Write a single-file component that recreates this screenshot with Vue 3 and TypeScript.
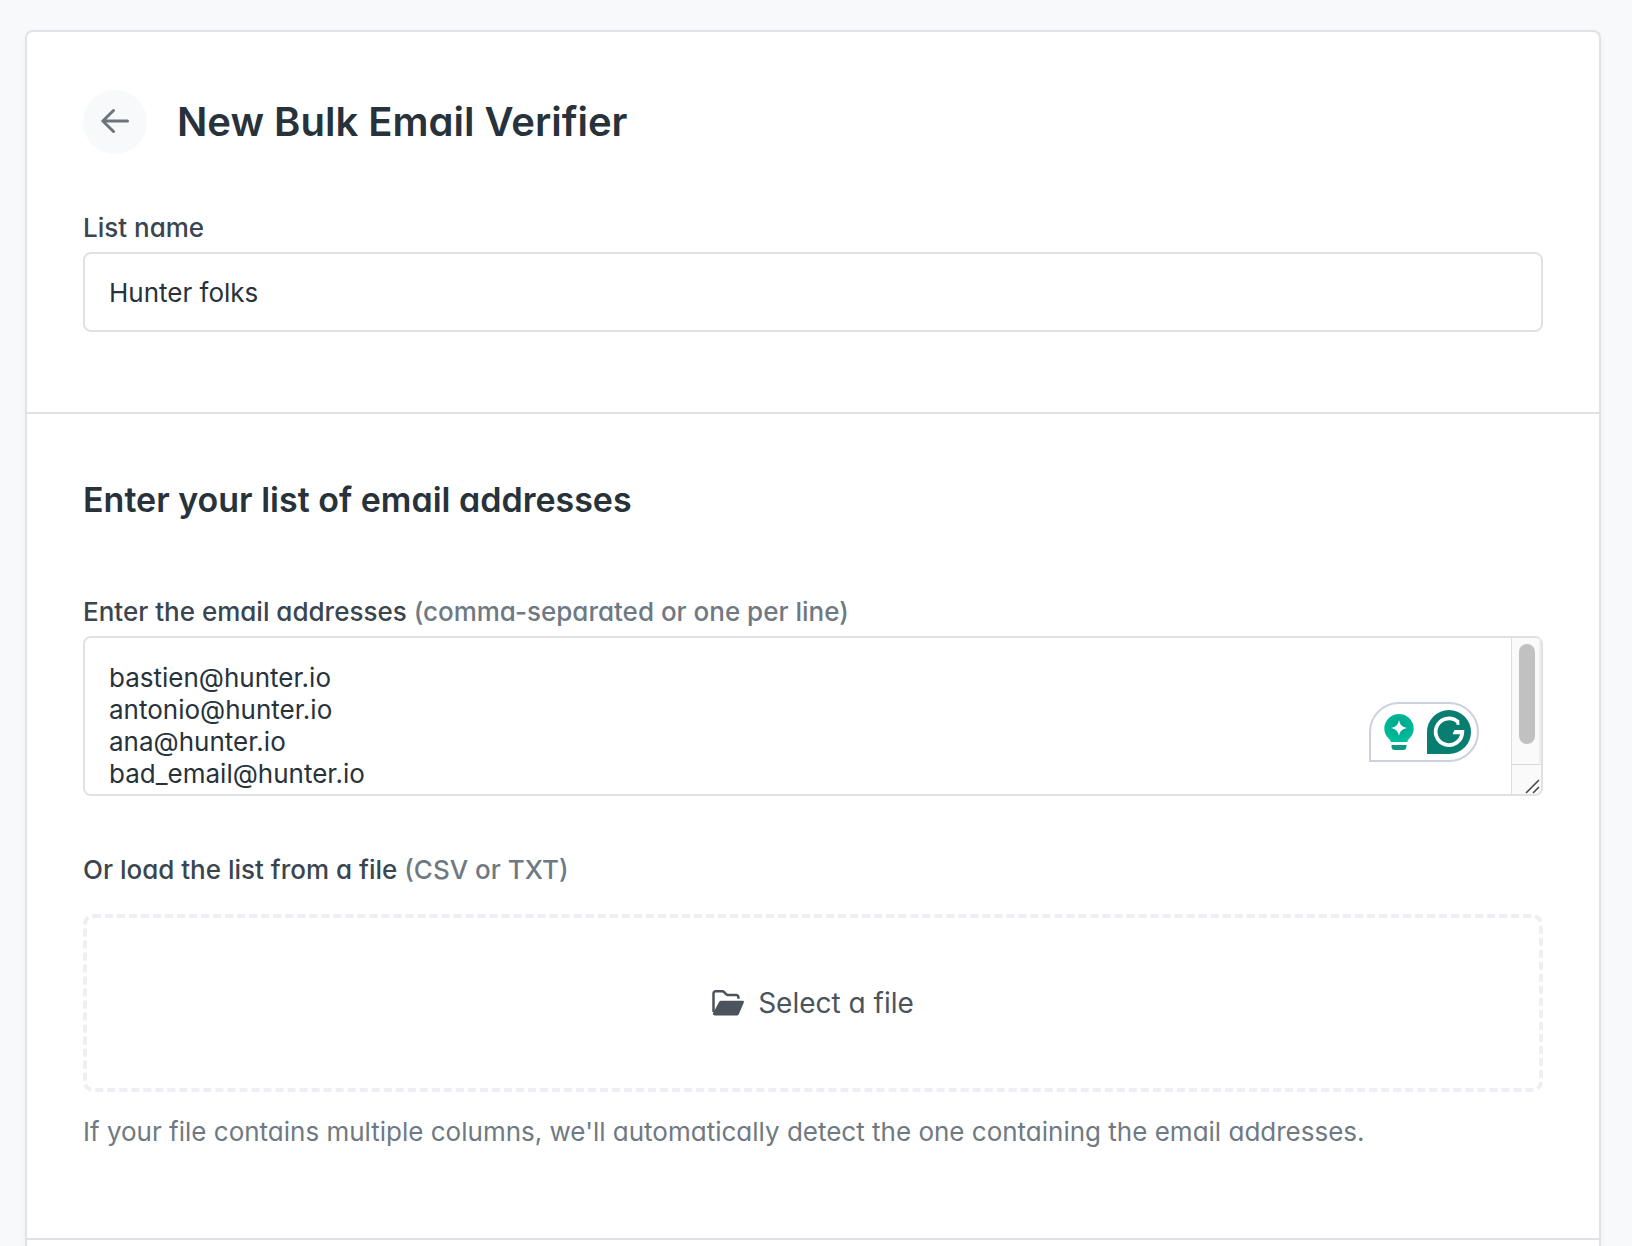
<script setup lang="ts">
import { ref } from 'vue'

const listName = ref('Hunter folks')
const addresses = ref(
  ['bastien@hunter.io', 'antonio@hunter.io', 'ana@hunter.io', 'bad_email@hunter.io', ''].join('\n'),
)
const picker = ref<HTMLInputElement | null>(null)

function openPicker(): void {
  picker.value?.click()
}
</script>

<template>
  <main class="card">
    <section class="section section-intro">
      <header class="title-row">
        <button class="back" type="button" aria-label="Back">
          <svg width="28" height="28" viewBox="0 0 28 28" fill="none" stroke="currentColor" stroke-width="3" stroke-linecap="round" stroke-linejoin="round" aria-hidden="true">
            <path d="M12.500 2.500 1.800 13 12.500 23.500M2 13h24.500" />
          </svg>
        </button>
        <h1>New Bulk Email Verifier</h1>
      </header>
      <label class="label" for="list-name">List name</label>
      <input id="list-name" v-model="listName" class="field" type="text" />
    </section>

    <section class="section section-list">
      <h2>Enter your list of email addresses</h2>

      <label class="label" for="addresses">
        Enter the email addresses <span class="hint">(comma-separated or one per line)</span>
      </label>
      <div class="area">
        <textarea id="addresses" v-model="addresses" class="field" spellcheck="false"></textarea>
        <div class="assistant" aria-hidden="true">
          <svg width="30" height="36" viewBox="0 0 30 36">
            <defs>
              <radialGradient id="bulb" cx="0.5" cy="0.4" r="0.6">
                <stop offset="0" stop-color="#00a48b" />
                <stop offset="1" stop-color="#00bf9c" />
              </radialGradient>
            </defs>
            <path fill="url(#bulb)" d="M15 0a14.700 14.700 0 0 1 14.700 14.600c0 4.700-2 7.600-4.600 10.200-1 1-1.600 2-1.900 3.200H6.800c-.3-1.200-.9-2.200-1.900-3.200C2.300 22.200.3 19.300.3 14.600A14.700 14.700 0 0 1 15 0z" />
            <path fill="#0b9a80" d="M7.500 31h15v1.500a3.500 3.500 0 0 1-3.500 3.500h-8a3.500 3.500 0 0 1-3.500-3.500z" />
            <path fill="#fff" d="M15 6c1 4.800 3.200 7 8 8-4.800 1-7 3.200-8 8-1-4.800-3.200-7-8-8 4.800-1 7-3.200 8-8z" />
          </svg>
          <svg width="44" height="44" viewBox="0 0 44 44">
            <path fill="#077e6f" d="M0 44V22a22 22 0 1 1 22 22z" />
            <path fill="none" stroke="#fff" stroke-width="3.800" d="M31.200 12.200A13.300 13.300 0 1 0 35.200 23" />
            <path fill="#fff" d="M27.500 20H37.300L37 24.200H25.500z" />
            <path fill="#fff" d="M29 14.500 32 9.500 32.500 15z" />
          </svg>
        </div>
        <div class="scrollbar" aria-hidden="true">
          <div class="track"><div class="thumb"></div></div>
          <svg class="grip" width="29" height="29" viewBox="0 0 29 29" fill="none" stroke="#4a4a4a" stroke-width="1.600">
            <path d="M14 28 27 15M21 28l6-6" />
          </svg>
        </div>
      </div>

      <p class="label file-label">
        Or load the list from a file <span class="hint">(CSV or TXT)</span>
      </p>
      <button class="dropzone" type="button" @click="openPicker">
        <svg width="32" height="26" viewBox="0 0 32 26" aria-hidden="true">
          <path fill="none" stroke="currentColor" stroke-width="2.500" stroke-linejoin="round" d="M1.500 22V3.500a2.200 2.200 0 0 1 2.200-2.200h6.500c.8 0 1.400.3 1.900.8l2.200 2.200c.4.4 1 .7 1.600.7h8.300a2.200 2.200 0 0 1 2.200 2.200v1.500" />
          <path fill="currentColor" d="M9.300 10.800h21.300c1 0 1.600.9 1.200 1.800l-4.900 11.400a2.500 2.500 0 0 1-2.300 1.500H3c-1.500 0-2.500-1-2-2.300l5.900-10.900c.5-1 1.300-1.500 2.400-1.500z" />
        </svg>
        Select a file
      </button>
      <input ref="picker" type="file" accept=".csv,.txt" hidden aria-label="Select a file" />
      <p class="note">If your file contains multiple columns, we'll automatically detect the one containing the email addresses.</p>
    </section>

    <section class="section-next"></section>
  </main>
</template>

<style>
body {
  background: #f8f9fb;
}
</style>

<style scoped>
.card {
  box-sizing: border-box;
  margin: 30px 31px 0 25px;
  border: 2px solid #dfe2e8;
  border-bottom: 0;
  border-radius: 8px 8px 0 0;
  background: #fff;
  box-shadow: 0 2px 6px rgba(40, 50, 70, 0.04);
  color: #27323b;
  font-family: Inter, "Liberation Sans", sans-serif;
  font-size: 26px;
  line-height: 32px;
  font-feature-settings: "cv11";
}

.section {
  display: flex;
  flex-direction: column;
  padding: 58px 56px 80px;
  border-bottom: 2px solid #dee2e7;
}

.section-list {
  padding-top: 64px;
  padding-bottom: 90px;
}

.section-next {
  height: 6px;
}

.title-row {
  display: flex;
  align-items: center;
  gap: 30px;
  margin-bottom: 58px;
}

.back {
  display: flex;
  align-items: center;
  justify-content: center;
  width: 64px;
  height: 64px;
  padding: 0;
  border: 0;
  border-radius: 50%;
  background: #f8f9fb;
  color: #6c757d;
}

h1,
h2,
p {
  margin: 0;
}

h1 {
  font-size: 40px;
  line-height: 48px;
  font-weight: 600;
}

h2 {
  margin-bottom: 74px;
  font-size: 34px;
  line-height: 44px;
  font-weight: 600;
}

.label {
  margin-bottom: 8px;
  color: #3a4550;
  font-weight: 500;
}

.hint {
  color: #6f7983;
}

.field {
  box-sizing: border-box;
  display: block;
  width: 100%;
  height: 80px;
  padding: 0 24px;
  border: 2px solid #dee2e7;
  border-radius: 8px;
  outline: 0;
  background: #fff;
  color: #27323b;
  font: inherit;
  font-feature-settings: normal;
}

.area {
  position: relative;
  margin-bottom: 58px;
}

textarea.field {
  height: 160px;
  padding: 24px;
  resize: none;
  scrollbar-width: none;
}

.assistant {
  position: absolute;
  top: 66px;
  right: 64px;
  box-sizing: border-box;
  display: flex;
  align-items: center;
  gap: 13px;
  width: 110px;
  height: 60px;
  padding-left: 13px;
  border: 2px solid #cdd0de;
  border-radius: 30px 30px 30px 0;
  background: #fff;
}

.scrollbar {
  position: absolute;
  top: 2px;
  right: 2px;
  bottom: 2px;
  display: flex;
  flex-direction: column;
  width: 29px;
  border-left: 1px solid #dcdcdc;
  border-radius: 0 6px 6px 0;
  background: #fafafa;
}

.track {
  flex: 1;
  padding: 6px 6px 0 7px;
  border-right: 2px solid #efefef;
  border-bottom: 1px solid #d8d8d8;
}

.thumb {
  width: 16px;
  height: 100px;
  border-radius: 8px;
  background: #c1c1c1;
}

.grip {
  display: block;
}

.file-label {
  margin-bottom: 28px;
}

.dropzone {
  box-sizing: border-box;
  display: flex;
  align-items: center;
  justify-content: center;
  gap: 14px;
  height: 178px;
  margin-bottom: 24px;
  border: 4px dashed #eeeff4;
  border-radius: 10px;
  background: #fff;
  color: #4b545d;
  font: inherit;
  font-size: 28px;
  font-feature-settings: inherit;
}

.note {
  color: #6f7983;
}
</style>
